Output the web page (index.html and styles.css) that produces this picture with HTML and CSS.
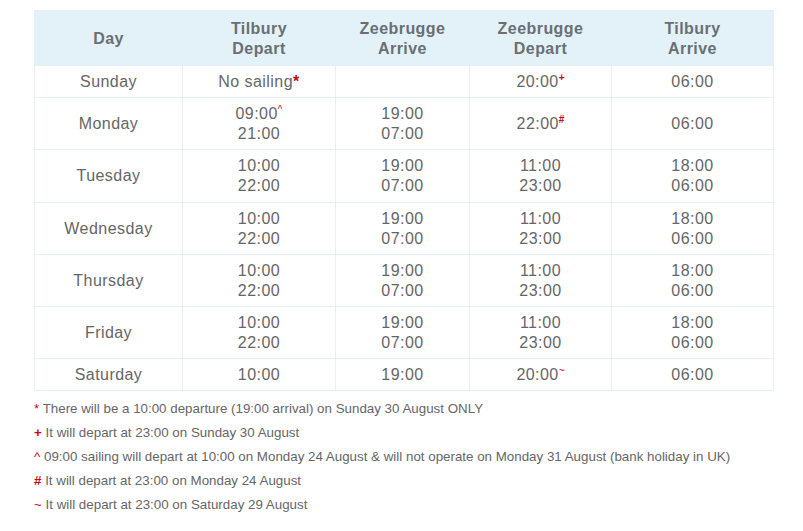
FILE: index.html
```html
<!DOCTYPE html>
<html>
<head>
<meta charset="utf-8">
<link rel="stylesheet" href="styles.css">
</head>
<body>
<div class="wrap">
<table class="sched">
  <colgroup>
    <col class="c1"><col class="c2"><col class="c3"><col class="c4"><col class="c5">
  </colgroup>
  <thead>
    <tr><th>Day</th><th>Tilbury<br>Depart</th><th>Zeebrugge<br>Arrive</th><th>Zeebrugge<br>Depart</th><th>Tilbury<br>Arrive</th></tr>
  </thead>
  <tbody>
    <tr><td>Sunday</td><td>No sailing<span class="star">*</span></td><td></td><td>20:00<sup class="mk b">+</sup></td><td>06:00</td></tr>
    <tr><td>Monday</td><td>09:00<sup class="mk">^</sup><br>21:00</td><td>19:00<br>07:00</td><td>22:00<sup class="mk b">#</sup></td><td>06:00</td></tr>
    <tr><td>Tuesday</td><td>10:00<br>22:00</td><td>19:00<br>07:00</td><td>11:00<br>23:00</td><td>18:00<br>06:00</td></tr>
    <tr><td>Wednesday</td><td>10:00<br>22:00</td><td>19:00<br>07:00</td><td>11:00<br>23:00</td><td>18:00<br>06:00</td></tr>
    <tr><td>Thursday</td><td>10:00<br>22:00</td><td>19:00<br>07:00</td><td>11:00<br>23:00</td><td>18:00<br>06:00</td></tr>
    <tr><td>Friday</td><td>10:00<br>22:00</td><td>19:00<br>07:00</td><td>11:00<br>23:00</td><td>18:00<br>06:00</td></tr>
    <tr><td>Saturday</td><td>10:00</td><td>19:00</td><td>20:00<sup class="mk">~</sup></td><td>06:00</td></tr>
  </tbody>
</table>
<ul class="notes">
  <li><span class="r">*</span> There will be a 10:00 departure (19:00 arrival) on Sunday 30 August ONLY</li>
  <li><span class="r b">+</span> It will depart at 23:00 on Sunday 30 August</li>
  <li><span class="r">^</span> 09:00 sailing will depart at 10:00 on Monday 24 August &amp; will not operate on Monday 31 August (bank holiday in UK)</li>
  <li><span class="r b">#</span> It will depart at 23:00 on Monday 24 August</li>
  <li><span class="r">~</span> It will depart at 23:00 on Saturday 29 August</li>
</ul>
</div>
</body>
</html>
```

FILE: styles.css
```css
html, body {
  margin: 0;
  padding: 0;
  background: #fff;
}
body {
  font-family: "Liberation Sans", Arial, sans-serif;
  color: #666;
}
.wrap {
  padding: 10px 0 0 34px;
}
.sched {
  border-collapse: collapse;
  width: 739px;
  table-layout: fixed;
  font-size: 16px;
  line-height: 20px;
  letter-spacing: 0.45px;
}
.c1 { width: 148px; }
.c2 { width: 153px; }
.c3 { width: 134px; }
.c4 { width: 142px; }
.c5 { width: 162px; }
.sched th {
  background: #e3f2f9;
  color: #6a6f73;
  font-weight: bold;
  padding: 8px 4px 6px;
  text-align: center;
  border: 1px solid #e3f2f9;
  border-bottom: 1px solid #e6eef0;
}
.sched td {
  border: 1px solid #e8eff1;
  text-align: center;
  padding: 6px 4px 5.2px;
  color: #666;
}
.star {
  color: #d0021b;
  font-weight: bold;
}
.mk {
  color: #d0021b;
  font-size: 10px;
  line-height: 0;
  vertical-align: 6px;
  letter-spacing: 0;
}
.mk.b { font-weight: bold; }
.notes {
  list-style: none;
  margin: 6px 0 0;
  padding: 0;
  font-size: 13.35px;
  line-height: 24px;
  color: #666;
}
.r { color: #d0021b; }
.r.b { font-weight: bold; }
```
